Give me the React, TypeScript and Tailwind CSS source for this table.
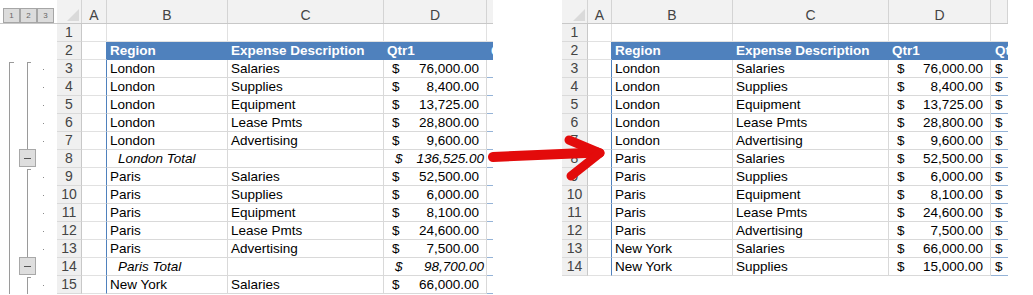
import React from 'react';

type Row = {
  n: number;
  kind: 'blank' | 'head' | 'data' | 'total';
  b?: string;
  c?: string;
  d?: string;
  e?: boolean;
  outline?: 'first' | 'start' | 'mid' | 'btn';
};

type Cols = { hdr: number; a: number; b: number; c: number; d: number; e: number };

const font = "font-['Liberation_Sans',Arial,sans-serif]";

const leftRows: Row[] = [
  { n: 1, kind: 'blank' },
  { n: 2, kind: 'head' },
  { n: 3, kind: 'data', b: 'London', c: 'Salaries', d: '76,000.00', outline: 'first' },
  { n: 4, kind: 'data', b: 'London', c: 'Supplies', d: '8,400.00', outline: 'mid' },
  { n: 5, kind: 'data', b: 'London', c: 'Equipment', d: '13,725.00', outline: 'mid' },
  { n: 6, kind: 'data', b: 'London', c: 'Lease Pmts', d: '28,800.00', outline: 'mid' },
  { n: 7, kind: 'data', b: 'London', c: 'Advertising', d: '9,600.00', outline: 'mid' },
  { n: 8, kind: 'total', b: 'London Total', d: '136,525.00', outline: 'btn' },
  { n: 9, kind: 'data', b: 'Paris', c: 'Salaries', d: '52,500.00', outline: 'start' },
  { n: 10, kind: 'data', b: 'Paris', c: 'Supplies', d: '6,000.00', outline: 'mid' },
  { n: 11, kind: 'data', b: 'Paris', c: 'Equipment', d: '8,100.00', outline: 'mid' },
  { n: 12, kind: 'data', b: 'Paris', c: 'Lease Pmts', d: '24,600.00', outline: 'mid' },
  { n: 13, kind: 'data', b: 'Paris', c: 'Advertising', d: '7,500.00', outline: 'mid' },
  { n: 14, kind: 'total', b: 'Paris Total', d: '98,700.00', outline: 'btn' },
  { n: 15, kind: 'data', b: 'New York', c: 'Salaries', d: '66,000.00', outline: 'start' },
];

const rightRows: Row[] = [
  { n: 1, kind: 'blank' },
  { n: 2, kind: 'head' },
  { n: 3, kind: 'data', b: 'London', c: 'Salaries', d: '76,000.00', e: true },
  { n: 4, kind: 'data', b: 'London', c: 'Supplies', d: '8,400.00', e: true },
  { n: 5, kind: 'data', b: 'London', c: 'Equipment', d: '13,725.00', e: true },
  { n: 6, kind: 'data', b: 'London', c: 'Lease Pmts', d: '28,800.00', e: true },
  { n: 7, kind: 'data', b: 'London', c: 'Advertising', d: '9,600.00', e: true },
  { n: 8, kind: 'data', b: 'Paris', c: 'Salaries', d: '52,500.00', e: true },
  { n: 9, kind: 'data', b: 'Paris', c: 'Supplies', d: '6,000.00', e: true },
  { n: 10, kind: 'data', b: 'Paris', c: 'Equipment', d: '8,100.00', e: true },
  { n: 11, kind: 'data', b: 'Paris', c: 'Lease Pmts', d: '24,600.00', e: true },
  { n: 12, kind: 'data', b: 'Paris', c: 'Advertising', d: '7,500.00', e: true },
  { n: 13, kind: 'data', b: 'New York', c: 'Salaries', d: '66,000.00', e: true },
  { n: 14, kind: 'data', b: 'New York', c: 'Supplies', d: '15,000.00', e: true },
];

function OutlineCell({ kind }: { kind?: Row['outline'] }) {
  if (!kind) return <div className="w-[57px] shrink-0" />;
  return (
    <div className="relative w-[57px] shrink-0">
      {/* level 1 bracket */}
      {kind === 'first' ? (
        <>
          <span className="absolute left-[9px] top-[2px] bottom-0 w-px bg-[#9a9a9a]" />
          <span className="absolute left-[9px] top-[2px] w-[5px] h-px bg-[#9a9a9a]" />
        </>
      ) : (
        <span className="absolute left-[9px] top-0 bottom-0 w-px bg-[#9a9a9a]" />
      )}
      {/* level 2 bracket */}
      {kind === 'first' && (
        <>
          <span className="absolute left-[27px] top-[2px] bottom-0 w-px bg-[#9a9a9a]" />
          <span className="absolute left-[27px] top-[2px] w-[4px] h-px bg-[#9a9a9a]" />
        </>
      )}
      {kind === 'start' && (
        <>
          <span className="absolute left-[27px] top-[1px] bottom-0 w-px bg-[#9a9a9a]" />
          <span className="absolute left-[27px] top-[1px] w-[4px] h-px bg-[#9a9a9a]" />
        </>
      )}
      {kind === 'mid' && <span className="absolute left-[27px] top-0 bottom-0 w-px bg-[#9a9a9a]" />}
      {kind === 'btn' ? (
        <span className="absolute left-[19px] top-[-1px] w-[17px] h-[18px] bg-[#dedede] border border-[#a8a8a8] flex items-center justify-center">
          <span className="w-[7px] h-px bg-[#555]" />
        </span>
      ) : (
        <span className="absolute left-[43px] top-[9px] w-px h-px bg-[#8a8a8a]" />
      )}
    </div>
  );
}

function Money({ v, italic }: { v: string; italic?: boolean }) {
  return (
    <div className={`flex justify-between ${italic ? 'italic pl-[11px] pr-[2px]' : 'pl-[8px] pr-[7px]'}`}>
      <span>$</span>
      <span>{v}</span>
    </div>
  );
}

function Sheet({ cols, rows, outline }: { cols: Cols; rows: Row[]; outline?: boolean }) {
  const letters: [string, number][] = [
    ['A', cols.a],
    ['B', cols.b],
    ['C', cols.c],
    ['D', cols.d],
    ['', cols.e],
  ];
  return (
    <div className={`flex flex-col overflow-hidden bg-white ${font}`}>
      {/* column headers */}
      <div className="flex h-[24px] shrink-0 bg-[#f2f2f2] border-b border-[#c8c8c8]">
        {outline && (
          <div className="w-[57px] shrink-0 flex pl-[3px] pt-[8px] bg-white">
            {['1', '2', '3'].map((l) => (
              <span
                key={l}
                className="w-[17px] h-[15px] bg-[#dcdcdc] border border-[#a6a6a6] text-[8px] leading-[13px] text-center text-[#666]"
              >
                {l}
              </span>
            ))}
          </div>
        )}
        <div style={{ width: cols.hdr }} className="shrink-0 relative border-r border-[#d4d4d4]">
          <svg className="absolute right-[2px] bottom-[2px]" width="12" height="12" viewBox="0 0 12 12">
            <polygon points="12,0 12,12 0,12" fill="#dadada" />
          </svg>
        </div>
        {letters.map(([l, w], i) => (
          <div
            key={i}
            style={{ width: w }}
            className="shrink-0 border-r border-[#d4d4d4] text-center text-[14px] leading-[16px] pt-[7px] text-[#444]"
          >
            {l}
          </div>
        ))}
      </div>
      {rows.map((r) => {
        const inTable = r.kind !== 'blank';
        const gridB = 'border-b border-[#e1e1e1]';
        const tableB = r.kind === 'head' ? 'border-b border-[#4f81bd]' : 'border-b border-[#95b3d7]';
        const rowB = inTable ? tableB : gridB;
        const headBg = r.kind === 'head' ? 'bg-[#4f81bd] text-white font-bold' : 'text-black';
        const vline = r.kind === 'head' ? 'border-r border-[#4f81bd]' : inTable ? 'border-r border-[#d9d9d9]' : 'border-r border-[#e1e1e1]';
        return (
          <div key={r.n} className="flex h-[18px] shrink-0 text-[13.5px] leading-[17px]">
            {outline && <OutlineCell kind={r.outline} />}
            <div
              style={{ width: cols.hdr }}
              className="shrink-0 bg-[#f0f0f0] border-r border-b border-r-[#c8c8c8] border-b-[#dadada] text-center text-[14px] leading-[17px] text-[#444]"
            >
              {r.n}
            </div>
            <div
              style={{ width: cols.a }}
              className={`shrink-0 border-b border-[#e1e1e1] border-r ${inTable ? 'border-r-[#4f81bd]' : 'border-r-[#e1e1e1]'}`}
            />
            <div style={{ width: cols.b }} className={`shrink-0 overflow-hidden whitespace-nowrap ${rowB} ${vline} ${headBg} ${r.kind === 'total' ? 'italic pl-[11px]' : 'pl-[3px]'}`}>
              {r.kind === 'head' ? 'Region' : r.b}
            </div>
            <div style={{ width: cols.c }} className={`shrink-0 overflow-hidden whitespace-nowrap pl-[3px] ${rowB} ${vline} ${headBg}`}>
              {r.kind === 'head' ? 'Expense Description' : r.c}
            </div>
            <div style={{ width: cols.d }} className={`shrink-0 overflow-hidden whitespace-nowrap ${rowB} ${vline} ${headBg} ${r.kind === 'head' ? 'pl-[3px]' : ''}`}>
              {r.kind === 'head' ? 'Qtr1' : r.d ? <Money v={r.d} italic={r.kind === 'total'} /> : null}
            </div>
            <div style={{ width: cols.e }} className={`shrink-0 overflow-hidden whitespace-nowrap pl-[4px] ${rowB} ${headBg}`}>
              {r.kind === 'head' ? 'Qtr2' : r.e ? '$' : ''}
            </div>
          </div>
        );
      })}
    </div>
  );
}

function Arrow() {
  return (
    <svg className="absolute left-[484px] top-[130px]" width="130" height="56" viewBox="484 130 130 56">
      <g stroke="#e30b0b" strokeLinecap="round" fill="none">
        <line x1="493" y1="157" x2="597" y2="152.5" strokeWidth="10" />
        <line x1="569" y1="140" x2="600" y2="153" strokeWidth="9" />
        <line x1="571" y1="176" x2="600" y2="153" strokeWidth="9" />
      </g>
    </svg>
  );
}

export default function App() {
  return (
    <div className="relative w-[1033px] h-[295px] overflow-hidden bg-white flex">
      <div className="w-[493px] h-[295px] shrink-0 overflow-hidden">
        <Sheet cols={{ hdr: 25, a: 25, b: 121, c: 156, d: 103, e: 8 }} rows={leftRows} outline />
      </div>
      <div className="ml-[69px] w-[446px] h-[276px] shrink-0 overflow-hidden">
        <Sheet cols={{ hdr: 26, a: 24, b: 121, c: 156, d: 102, e: 17 }} rows={rightRows} />
      </div>
      <Arrow />
    </div>
  );
}
